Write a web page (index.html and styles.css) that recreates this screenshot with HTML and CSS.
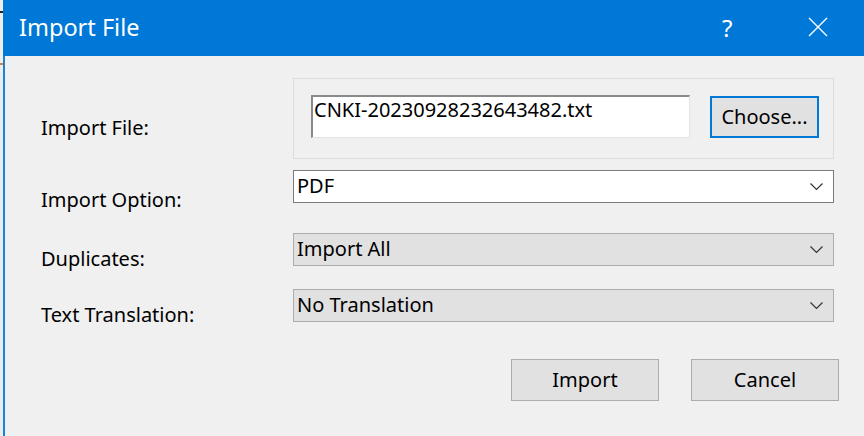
FILE: index.html
```html
<!DOCTYPE html>
<html>
<head>
<meta charset="utf-8">
<link rel="stylesheet" href="styles.css">
</head>
<body>
<div class="screen">
  <div class="desk"><span class="mark"></span><span class="dot"></span></div>
  <div class="dialog">
    <div class="titlebar">
      <div class="title">Import File</div>
      <div class="help">?</div>
      <div class="close">
        <svg width="20" height="20" viewBox="0 0 20 20"><path d="M1 1 L19 19 M19 1 L1 19" stroke="#fff" stroke-width="1.4" fill="none"/></svg>
      </div>
    </div>
    <div class="content">
      <div class="row row-file">
        <div class="label">Import File:</div>
        <div class="group">
          <div class="textbox">CNKI-20230928232643482.txt</div>
          <div class="btn btn-focus">Choose...</div>
        </div>
      </div>
      <div class="row row-option">
        <div class="label">Import Option:</div>
        <div class="select select-white"><span>PDF</span><svg class="chev" width="13" height="8" viewBox="0 0 13 8"><path d="M0.5 0.5 L6.5 6.5 L12.5 0.5" stroke="#333" stroke-width="1.2" fill="none"/></svg></div>
      </div>
      <div class="row row-dup">
        <div class="label">Duplicates:</div>
        <div class="select"><span>Import All</span><svg class="chev" width="13" height="8" viewBox="0 0 13 8"><path d="M0.5 0.5 L6.5 6.5 L12.5 0.5" stroke="#333" stroke-width="1.2" fill="none"/></svg></div>
      </div>
      <div class="row row-trans">
        <div class="label">Text Translation:</div>
        <div class="select"><span>No Translation</span><svg class="chev" width="13" height="8" viewBox="0 0 13 8"><path d="M0.5 0.5 L6.5 6.5 L12.5 0.5" stroke="#333" stroke-width="1.2" fill="none"/></svg></div>
      </div>
      <div class="actions">
        <div class="btn btn-wide">Import</div>
        <div class="btn btn-wide">Cancel</div>
      </div>
    </div>
  </div>
</div>
</body>
</html>
```
FILE: styles.css
```css
* { box-sizing: border-box; }
html, body { margin: 0; padding: 0; }
body {
  width: 864px;
  height: 436px;
  overflow: hidden;
  background: #f0f0f0;
  font-family: "Noto Sans", "Open Sans", sans-serif;
  color: #000;
}
.screen {
  display: flex;
  height: 436px;
}
.desk {
  width: 3px;
  background: #ececec;
  display: flex;
  flex-direction: column;
}
.mark {
  display: block;
  height: 2px;
  margin-top: 11px;
  background: #222;
}
.dot {
  display: block;
  height: 2px;
  margin-top: 50px;
  background: #d9803a;
}
.dialog {
  flex: 1;
  display: flex;
  flex-direction: column;
  border-left: 2px solid #1883d7;
  background: #f0f0f0;
}
.titlebar {
  height: 56px;
  background: #0078d7;
  color: #fff;
  display: flex;
  align-items: center;
  margin-left: -2px;
}
.title {
  font-size: 23.5px;
  padding-left: 16px;
  flex: 1;
  padding-bottom: 2px;
}
.help {
  font-size: 24px;
  width: 20px;
  margin-right: 66px;
  padding-bottom: 2px;
}
.close {
  width: 20px;
  height: 20px;
  margin-right: 36px;
  margin-bottom: 2px;
  display: flex;
}
.content {
  display: flex;
  flex-direction: column;
  padding-left: 36px;
  padding-top: 22px;
}
.row {
  display: flex;
  align-items: flex-start;
}
.label {
  width: 252px;
  height: 100%;
  font-size: 20px;
  line-height: 20px;
  white-space: nowrap;
}
.row-file { height: 81px; }
.row-file .label { padding-top: 40px; }
.group {
  width: 541px;
  height: 81px;
  border: 1px solid #dcdcdc;
  display: flex;
  align-items: flex-start;
  padding: 16px 0 0 17px;
  gap: 20px;
}
.textbox {
  width: 379px;
  height: 43px;
  background: #fff;
  border-top: 2px solid #8a8a8a;
  border-left: 2px solid #8a8a8a;
  border-right: 1px solid #e3e3e3;
  border-bottom: 1px solid #e3e3e3;
  font-size: 20px;
  padding-left: 1px;
  line-height: 26px;
  padding-top: 0;
}
.btn {
  background: #e1e1e1;
  border: 1px solid #adadad;
  font-size: 20px;
  display: flex;
  align-items: center;
  justify-content: center;
  padding-bottom: 1px;
}
.btn-focus {
  width: 109px;
  height: 42px;
  border: 2px solid #0078d7;
  margin-top: 1px;
}
.row-option, .row-dup, .row-trans { height: 33px; }
.row-option { margin-top: 11px; }
.row-option .label { padding-top: 20px; }
.row-dup { margin-top: 30px; }
.row-dup .label { padding-top: 16px; }
.row-trans { margin-top: 23px; }
.row-trans .label { padding-top: 16px; }
.select {
  width: 541px;
  height: 33px;
  background: #e1e1e1;
  border: 1px solid #adadad;
  display: flex;
  align-items: center;
  justify-content: space-between;
  padding: 0 10px 0 3px;
  font-size: 20px;
}
.select span { padding-bottom: 2px; }
.select-white {
  background: #fff;
  border-color: #7a7a7a;
}
.chev { margin-top: 1px; }
.actions {
  display: flex;
  justify-content: flex-end;
  gap: 32px;
  margin-top: 37px;
  padding-right: 25px;
}
.btn-wide {
  width: 148px;
  height: 42px;
}
```
